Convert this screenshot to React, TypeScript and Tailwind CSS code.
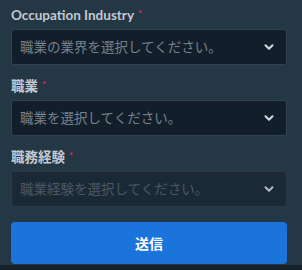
import React from 'react';
import { ChevronDown } from 'lucide-react';

const font = { fontFamily: 'Lato, "Noto Sans CJK JP", sans-serif' };

function Field({ label, placeholder, disabled }: { label: string; placeholder: string; disabled?: boolean }) {
  return (
    <div className="mb-[13px]">
      <div className="h-[18px] mb-[4px] flex items-center text-[13.5px] font-bold text-[#c3c9d0] leading-none">
        {label}
        <span className="ml-[4px] text-[10px] font-bold text-[#d0304f] self-start mt-[1px]">*</span>
      </div>
      <div
        className={`h-9 w-[276px] rounded-[3px] border flex items-center justify-between pl-[8px] pr-[10px] ${
          disabled ? 'bg-[#1b2935] border-[#2a3b48]' : 'bg-[#121f2b] border-[#2f4351]'
        }`}
      >
        <span className={`text-[13.5px] ${disabled ? 'text-[#4a5866]' : 'text-[#76818c]'}`}>{placeholder}</span>
        <ChevronDown size={14} strokeWidth={3.6} className={disabled ? 'text-[#aeb8c4]' : 'text-[#d0d7e0]'} />
      </div>
    </div>
  );
}

export default function App() {
  return (
    <div className="w-[302px] h-[270px] bg-[#243744] flex flex-col" style={font}>
      <div className="flex-1 pl-[11px] pt-[7px]">
        <Field label="Occupation Industry" placeholder="職業の業界を選択してください。" />
        <Field label="職業" placeholder="職業を選択してください。" />
        <Field label="職務経験" placeholder="職業経験を選択してください。" disabled />
        <button className="mt-[2px] w-[276px] h-[42px] rounded-[4px] bg-[#1a74dc] text-white text-[14px] font-bold">
          送信
        </button>
      </div>
      <div className="h-[5px] bg-[#15222c]" />
    </div>
  );
}
